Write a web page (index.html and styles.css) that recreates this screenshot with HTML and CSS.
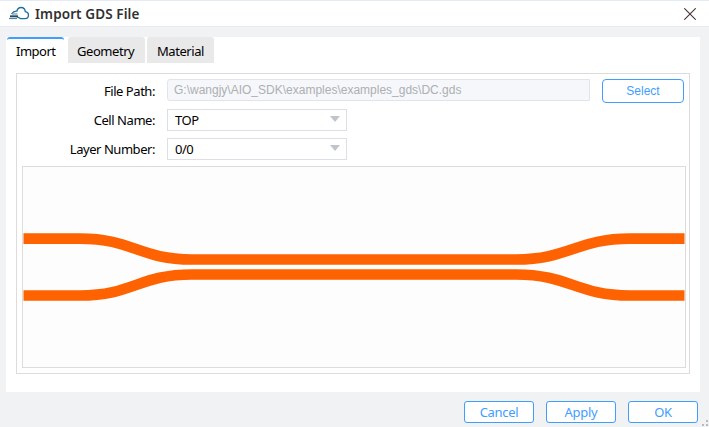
FILE: index.html
```html
<!DOCTYPE html>
<html lang="en">
<head>
<meta charset="utf-8">
<title>Import GDS File</title>
<link rel="stylesheet" href="styles.css">
</head>
<body>
<div class="dialog">
  <header class="titlebar">
    <svg class="logo" width="22" height="16" viewBox="0 0 22 16" fill="none">
      <path d="M2.500 8C4 5.800 5.800 5 7.800 5.200C8.500 2.700 10 1.500 12.200 1.500C14.500 1.500 16 3 16.300 5.600C18.600 5.900 19.500 7.300 19.500 9C19.500 11.300 18 12.600 16 12.600H11.500L7.500 10.500" stroke="#1b6f9c" stroke-width="1.300"/>
      <path d="M3 8H8.500" stroke="#5f9dbd" stroke-width="1.200"/>
      <path d="M1 10.300H9" stroke="#29475a" stroke-width="1.900"/>
      <path d="M0 12.500H8" stroke="#4b88a8" stroke-width="1.200"/>
    </svg>
    <h1 class="title">Import GDS File</h1>
    <svg class="close" width="12" height="12" viewBox="0 0 12 12"><path d="M.3.3L11.700 11.700M11.700.3L.3 11.700" stroke="#4a3434" stroke-width="1.100"/></svg>
  </header>
  <main class="panel">
    <nav class="tabs">
      <span class="tab active">Import</span>
      <span class="tab geometry">Geometry</span>
      <span class="tab material">Material</span>
    </nav>
    <section class="group">
      <div class="form">
        <label class="file-label">File Path:</label>
        <div class="file-row"><div class="path">G:\wangjy\AIO_SDK\examples\examples_gds\DC.gds</div><button class="btn select-file">Select</button></div>
        <label class="cell-label">Cell Name:</label>
        <div class="combo"><span>TOP</span><i class="arrow"></i></div>
        <label class="layer-label">Layer Number:</label>
        <div class="combo"><span>0/0</span><i class="arrow"></i></div>
      </div>
      <div class="preview">
        <svg width="662" height="200" viewBox="23 167 662 200" fill="none" stroke="#ff6200" stroke-width="10.700">
          <path d="M23.500 238.600H80C133 238.600 139 259.500 192 259.500H516C569 259.500 577 238.600 630 238.600H684.500"/>
          <path d="M23.500 295.500H80C133 295.500 139 274.500 192 274.500H516C569 274.500 577 295.500 630 295.500H684.500"/>
        </svg>
      </div>
    </section>
  </main>
  <footer class="footer">
    <button class="btn cancel">Cancel</button>
    <button class="btn apply">Apply</button>
    <button class="btn ok">OK</button>
    <svg class="grip" width="7" height="7" viewBox="0 0 7 7" fill="#bbb"><path d="M4 0h2v2h-2zM0 4h2v2h-2zM4 4h2v2h-2z"/></svg>
  </footer>
</div>
</body>
</html>
```

FILE: styles.css
```css
* { box-sizing: border-box; }
body { margin: 0; font: 13px/17px "Noto Sans", sans-serif; color: #000; letter-spacing: -.45px; }
.dialog { width: 709px; height: 427px; background: #f0f2f4; display: flex; flex-direction: column; position: relative; overflow: hidden; }
.titlebar { height: 27px; background: #fff; border-top: 1px solid #e6eaf5; border-bottom: 1px solid #e8ebf4; display: flex; align-items: center; padding: 0 13px 0 9px; }
.logo { flex: none; margin-top: 1px; }
.title { font-size: 13.5px; line-height: 17px; font-weight: 600; letter-spacing: .1px; color: #303133; margin: 2px auto 0 4px; white-space: nowrap; }
.close { flex: none; }
.panel { margin: 10px 9px 0 6px; height: 355px; background: #fff; }
.tabs { display: flex; height: 26px; padding-left: 1px; }
.tab { width: 57px; padding-left: 9px; line-height: 28px; border-radius: 3px 3px 0 0; background: #e9e9e9; margin-right: 4px; white-space: nowrap; }
.tab.active { background: #fff; border-top: 2px solid #409eff; line-height: 24px; letter-spacing: -.5px; }
.tab.geometry { width: 77px; margin-right: 2px; }
.tab.material { width: 67px; padding-left: 10px; }
.group { margin: 10px 10px 0; height: 301px; border: 1px solid #dcdcdc; padding: 5px 3px 0 5px; }
.form { display: grid; grid-template-columns: 133px 1fr; grid-template-rows: 24px 23px 22px; column-gap: 12px; row-gap: 6px; height: 87px; }
.form label { justify-self: end; line-height: 25px; white-space: nowrap; }
.file-row { display: flex; align-items: flex-start; }
.path { width: 423px; height: 22px; border: 1px solid #e1e4eb; border-radius: 3px 0 0 3px; background: #f5f7fa; color: #adafb3; font: 12px/20px "Liberation Sans", sans-serif; letter-spacing: 0; padding-left: 6px; white-space: nowrap; }
.btn { border: 1px solid #409eff; border-radius: 3px; background: #fff; color: #409eff; font: 13px/20px "Noto Sans", sans-serif; letter-spacing: -.3px; padding: 0; width: 70px; height: 22px; }
.select-file { width: 82px; height: 24px; margin-left: 12px; font: 12px/23px "Liberation Sans", sans-serif; letter-spacing: 0; border-radius: 4px; }
.combo { width: 180px; height: 22px; border: 1px solid #dcdfe6; padding: 0 6px 0 7px; display: flex; justify-content: space-between; line-height: 21px; }
.arrow { border: 5px solid transparent; border-top: 6px solid #c0c4cc; border-bottom: 0; margin-top: 6px; height: 6px; }
.form .cell-label, .form .layer-label { line-height: 23px; }
.preview { height: 202px; border: 1px solid #dcdcdc; background: #fdfdfd; width: 664px; }
.preview svg { display: block; }
.footer { display: flex; justify-content: flex-end; gap: 12px; padding: 9px 11px 0 0; }
.grip { position: absolute; right: 0; bottom: 0; }
```
